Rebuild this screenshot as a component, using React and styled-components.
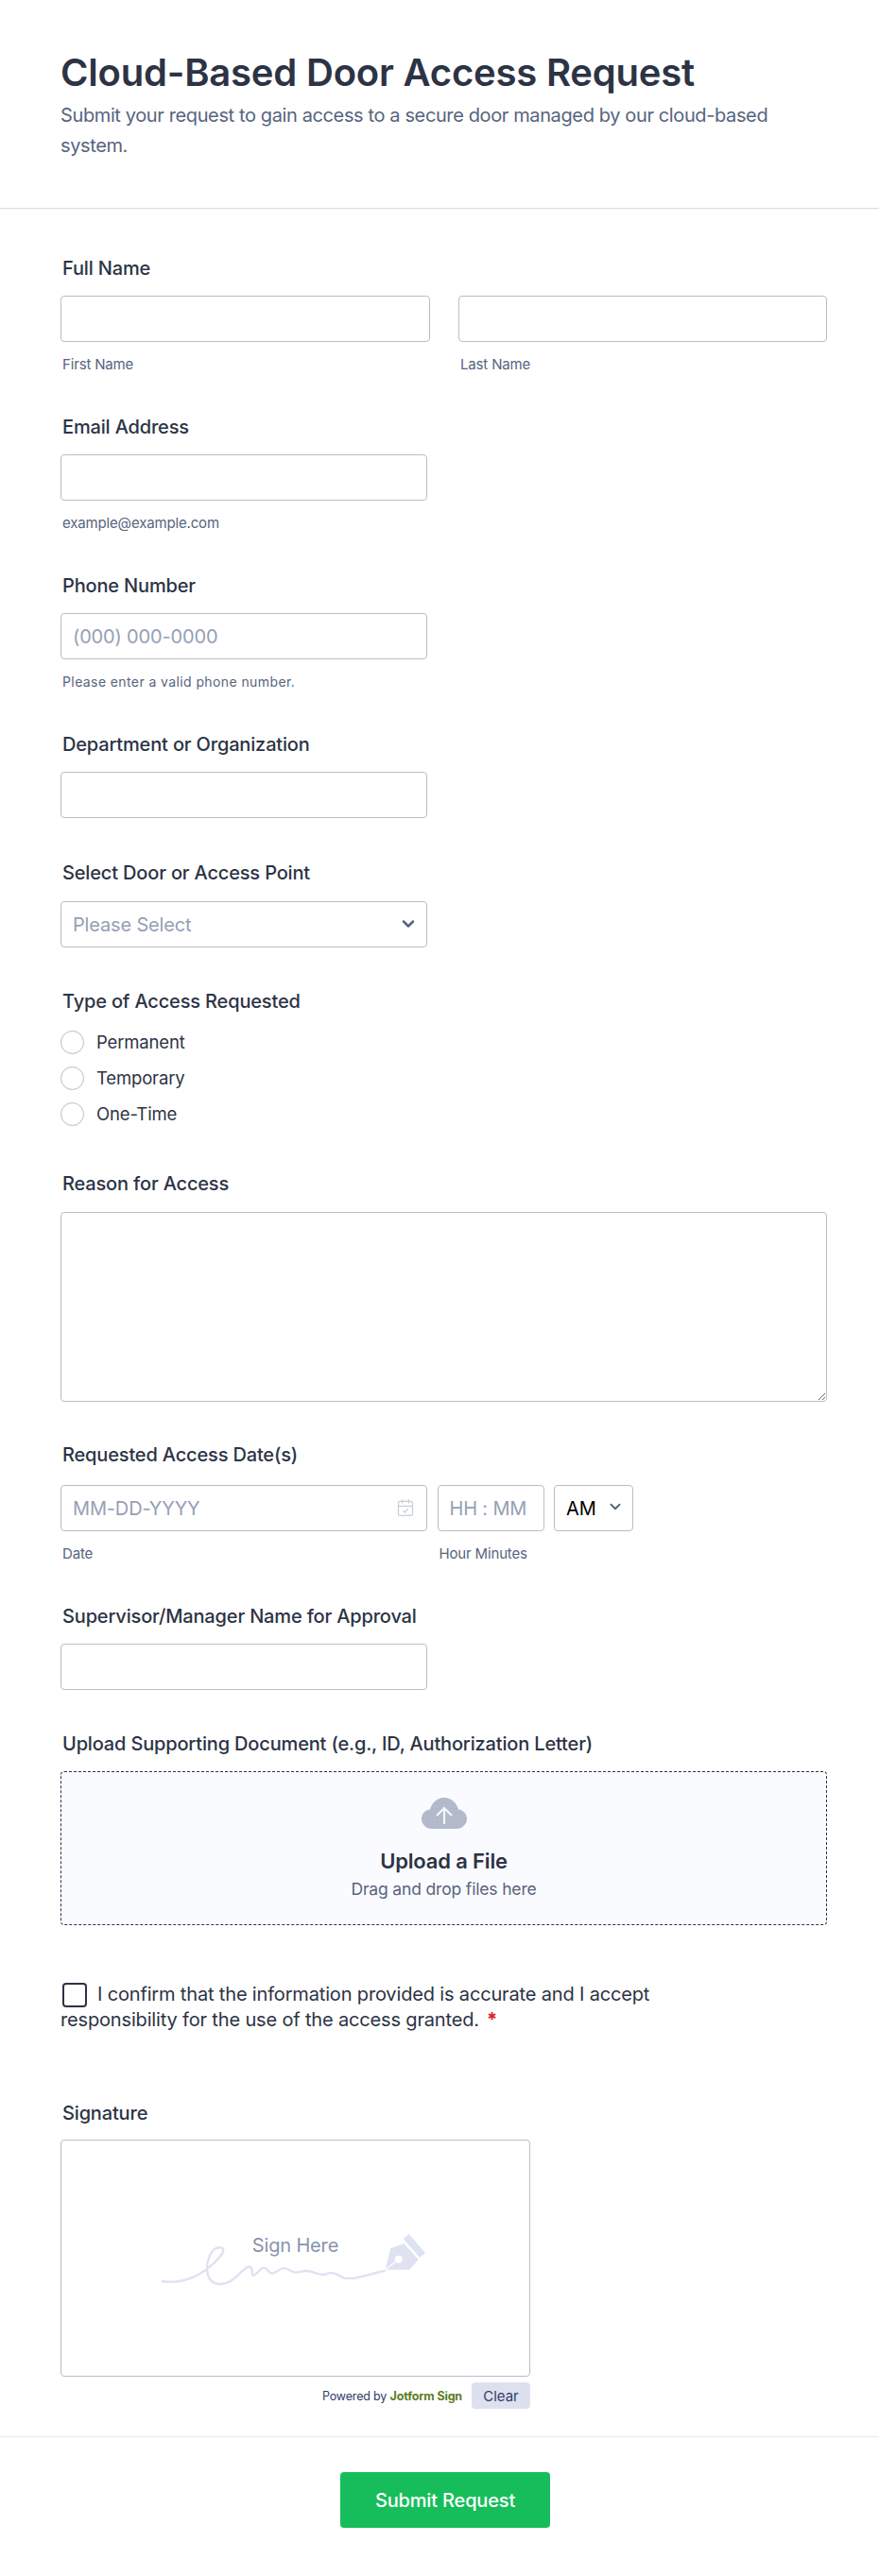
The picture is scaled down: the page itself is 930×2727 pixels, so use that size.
import React from 'react';
import styled, { createGlobalStyle } from 'styled-components';
import { CalendarCheck, ChevronDown } from 'lucide-react';

const GlobalStyle = createGlobalStyle`
    html, body {
        margin: 0;
        padding: 0;
        background: #FFF;
    }
    * {
        box-sizing: border-box;
    }
    body {
        font-family: Inter, "Liberation Sans", sans-serif;
        letter-spacing: -0.01em;
        color: #2C3345;
    }
`;

const Page = styled.div`
    width: 930px;
    height: 2727px;
    overflow: hidden;
`;

const Header = styled.header`
    height: 221px;
    padding: 52px 64px 0;
    border-bottom: 1px solid #D3DCEF;
`;

const Title = styled.h1`
    margin: 0 0 4px;
    font-size: 40px;
    line-height: 50px;
    font-weight: 600;
    letter-spacing: -0.2px;
    color: #2C3345;
`;

const Description = styled.p`
    margin: 0;
    font-size: 20px;
    line-height: 32px;
    letter-spacing: -0.38px;
    color: #57647E;
`;

const Form = styled.form`
    padding: 51px 64px 0;
    display: flex;
    flex-direction: column;
`;

const Field = styled.div`
    margin-bottom: ${p => p.$gap || 45}px;
`;

const Label = styled.label`
    display: block;
    padding-left: 2px;
    margin-bottom: ${p => p.$gap || 17}px;
    font-size: 20px;
    line-height: 24px;
    font-weight: 450;
    color: #2C3345;
`;

const Row = styled.div`
    display: flex;
    gap: ${p => p.$gap || 10.5}px;
`;

const Column = styled.div`
    width: ${p => p.$width}px;
`;

const TextInput = styled.input`
    display: block;
    width: ${p => p.$width || 388}px;
    height: 49px;
    padding: 0 12px;
    border: 1px solid #B8BDC9;
    border-radius: 4px;
    background: #FFF;
    font-family: inherit;
    font-size: 20px;
    letter-spacing: inherit;
    color: #2C3345;
    outline: none;

    &::placeholder {
        color: #95A0B5;
        opacity: 1;
    }
`;

const SubLabel = styled.div`
    margin-top: 15px;
    padding-left: 2px;
    font-size: 15px;
    line-height: 18px;
    color: #57647E;
`;

const PhoneHint = styled(SubLabel)`
    font-size: 14px;
    letter-spacing: 0.4px;
`;

const SelectWrap = styled.div`
    position: relative;
    width: ${p => p.$width}px;
    height: 49px;

    svg {
        position: absolute;
        top: 14px;
        right: ${p => p.$iconRight}px;
        color: #57647E;
        pointer-events: none;
    }
`;

const Select = styled.select`
    width: 100%;
    height: 100%;
    padding: 0 12px;
    border: 1px solid #B8BDC9;
    border-radius: 4px;
    background: #FFF;
    appearance: none;
    font-family: inherit;
    font-size: 20px;
    letter-spacing: inherit;
    color: ${p => p.$color};
    outline: none;
`;

const DateWrap = styled.div`
    position: relative;

    svg {
        position: absolute;
        top: 14px;
        right: 13px;
        color: #C8CDD8;
    }
`;

const RadioList = styled.div`
    display: flex;
    flex-direction: column;
    gap: 14px;
`;

const RadioRow = styled.label`
    display: flex;
    align-items: center;
    gap: 13px;
    height: 24px;
    font-size: 18.5px;
    color: #2C3345;
`;

const RadioCircle = styled.span`
    width: 25px;
    height: 25px;
    border: 1px solid #B8BDC9;
    border-radius: 50%;
    background: #FFF;
`;

const TextArea = styled.textarea`
    display: block;
    width: 811px;
    height: 201px;
    border: 1px solid #B8BDC9;
    border-radius: 4px;
    outline: none;
    font-family: inherit;
`;

const DropZone = styled.div`
    width: 811px;
    height: 163px;
    padding-top: 27px;
    border: 1px dashed #2C3345;
    border-radius: 4px;
    background: #FAFBFE;
    display: flex;
    flex-direction: column;
    align-items: center;
`;

const DropTitle = styled.div`
    margin-top: 18px;
    font-size: 22px;
    line-height: 32px;
    font-weight: 600;
    color: #2C3345;
`;

const DropHint = styled.div`
    margin-top: 2px;
    font-size: 17.5px;
    line-height: 24px;
    color: #57647E;
`;

const ConsentText = styled.div`
    width: 700px;
    font-size: 20px;
    line-height: 27px;
    color: #2C3345;
`;

const CheckBox = styled.span`
    display: inline-block;
    width: 26px;
    height: 26px;
    margin: 0 11px 0 2px;
    border: 2px solid #2C3345;
    border-radius: 4px;
    vertical-align: -7px;
`;

const Required = styled.span`
    margin-left: 8px;
    font-weight: 700;
    color: #E0201B;
`;

const SignatureBox = styled.div`
    position: relative;
    width: 497px;
    height: 251px;
    border: 1px solid #B8BDC9;
    border-radius: 4px;
`;

const SignatureDrawing = styled.svg`
    position: absolute;
    left: 75px;
    top: 54px;
`;

const SignHere = styled.div`
    position: absolute;
    top: 99px;
    left: 0;
    right: 0;
    text-align: center;
    font-size: 20px;
    line-height: 24px;
    color: #8894AB;
`;

const SignatureFooter = styled.div`
    width: 497px;
    margin-top: 6px;
    display: flex;
    justify-content: flex-end;
    align-items: center;
    gap: 10px;
`;

const PoweredBy = styled.div`
    font-size: 12.5px;
    color: #343C6A;
`;

const JotformSign = styled.span`
    font-weight: 700;
    color: #5B7E1F;
`;

const ClearButton = styled.button`
    width: 62px;
    height: 28px;
    padding: 0;
    border: none;
    border-radius: 4px;
    background: #DDE1EF;
    font-family: inherit;
    font-size: 15px;
    color: #343C6A;
`;

const Footer = styled.footer`
    margin-top: 29px;
    padding: 37px 0 0 12px;
    border-top: 1px solid #E3E8F3;
    display: flex;
    justify-content: center;
`;

const SubmitButton = styled.button`
    width: 222px;
    height: 59px;
    border: none;
    border-radius: 4px;
    background: #18BD5B;
    font-family: inherit;
    font-size: 20px;
    font-weight: 450;
    letter-spacing: inherit;
    color: #FFF;
`;

const cloudShape = 'M11 33C5 33 0 28 0 22.5C0 17 4 13 9 12.5C11 5 17 0 24 0C31 0 37 5 39 12.5C44 13 48 17 48 22.5C48 28 43 33 37 33Z';

const CloudIcon = () => (
    <svg width="48" height="33" viewBox="0 0 48 33">
        <defs>
            <pattern id="cloud-dots" width="5" height="5" patternUnits="userSpaceOnUse">
                <circle cx="1.5" cy="1.5" r="0.4" fill="#7F9CCB" />
            </pattern>
        </defs>
        <path d={cloudShape} fill="#B3BBCB" />
        <path d={cloudShape} fill="url(#cloud-dots)" />
        <path d="M24 28V11M16 19L24 11L32 19" fill="none" stroke="#F4F6FB" strokeWidth="2.2" />
    </svg>
);

const SignatureArt = () => (
    <SignatureDrawing width="340" height="130" viewBox="0 0 1020 390">
        <path
            d="M95 285C150 292 205 275 250 235C285 205 300 180 280 178C250 175 230 225 240 265C250 298 290 305 325 275C345 258 365 232 375 240C385 248 375 272 388 265C400 258 410 235 425 245C435 252 435 265 450 258C470 248 480 235 500 250C515 262 530 255 550 252C575 250 590 270 615 262C640 252 650 265 670 274C710 282 750 262 800 252"
            fill="none"
            stroke="#DEE2F1"
            strokeWidth="7"
            strokeLinecap="round"
        />
        <path d="M878 135L930 195L912 210L860 150Z" fill="#DEE2F1" />
        <path d="M803 248L820 180L862 165L908 216L880 248Z" fill="#DEE2F1" />
        <circle cx="845" cy="215" r="12" fill="#FFF" />
        <path d="M845 215L805 247" stroke="#FFF" strokeWidth="4" />
    </SignatureDrawing>
);

const SimpleField = ({ label, placeholder, hint, gap }) => (
    <Field $gap={gap}>
        <Label>{label}</Label>
        <TextInput placeholder={placeholder} />
        {hint}
    </Field>
);

export default function App() {
    return (
        <Page>
            <GlobalStyle />
            <Header>
                <Title>Cloud-Based Door Access Request</Title>
                <Description>
                    Submit your request to gain access to a secure door managed by our cloud-based system.
                </Description>
            </Header>
            <Form>
                <Field>
                    <Label>Full Name</Label>
                    <Row $gap={30}>
                        <Column $width={391}>
                            <TextInput $width={391} />
                            <SubLabel>First Name</SubLabel>
                        </Column>
                        <Column $width={390}>
                            <TextInput $width={390} />
                            <SubLabel>Last Name</SubLabel>
                        </Column>
                    </Row>
                </Field>
                <SimpleField label="Email Address" hint={<SubLabel>example@example.com</SubLabel>} />
                <SimpleField
                    label="Phone Number"
                    placeholder="(000) 000-0000"
                    hint={<PhoneHint>Please enter a valid phone number.</PhoneHint>}
                />
                <SimpleField label="Department or Organization" gap={46} />
                <Field>
                    <Label $gap={18}>Select Door or Access Point</Label>
                    <SelectWrap $width={388} $iconRight={10}>
                        <Select $color="#95A0B5" defaultValue="">
                            <option value="">Please Select</option>
                        </Select>
                        <ChevronDown size={20} strokeWidth={3} />
                    </SelectWrap>
                </Field>
                <Field $gap={50}>
                    <Label $gap={19}>Type of Access Requested</Label>
                    <RadioList>
                        <RadioRow><RadioCircle />Permanent</RadioRow>
                        <RadioRow><RadioCircle />Temporary</RadioRow>
                        <RadioRow><RadioCircle />One-Time</RadioRow>
                    </RadioList>
                </Field>
                <Field $gap={44}>
                    <Label $gap={18}>Reason for Access</Label>
                    <TextArea />
                </Field>
                <Field>
                    <Label $gap={20}>Requested Access Date(s)</Label>
                    <Row>
                        <Column $width={388}>
                            <DateWrap>
                                <TextInput placeholder="MM-DD-YYYY" />
                                <CalendarCheck size={20} strokeWidth={1.5} />
                            </DateWrap>
                            <SubLabel>Date</SubLabel>
                        </Column>
                        <Column $width={113}>
                            <TextInput $width={113} placeholder="HH : MM" />
                            <SubLabel>Hour Minutes</SubLabel>
                        </Column>
                        <SelectWrap $width={84} $iconRight={10}>
                            <Select $color="#000" defaultValue="AM">
                                <option value="AM">AM</option>
                            </Select>
                            <ChevronDown size={18} strokeWidth={2.5} />
                        </SelectWrap>
                    </Row>
                </Field>
                <SimpleField label="Supervisor/Manager Name for Approval" />
                <Field $gap={60}>
                    <Label>Upload Supporting Document (e.g., ID, Authorization Letter)</Label>
                    <DropZone>
                        <CloudIcon />
                        <DropTitle>Upload a File</DropTitle>
                        <DropHint>Drag and drop files here</DropHint>
                    </DropZone>
                </Field>
                <Field $gap={73}>
                    <ConsentText>
                        <CheckBox />
                        I confirm that the information provided is accurate and I accept responsibility for the use of the access granted.
                        <Required>*</Required>
                    </ConsentText>
                </Field>
                <div>
                    <Label $gap={16}>Signature</Label>
                    <SignatureBox>
                        <SignHere>Sign Here</SignHere>
                        <SignatureArt />
                    </SignatureBox>
                    <SignatureFooter>
                        <PoweredBy>Powered by <JotformSign>Jotform Sign</JotformSign></PoweredBy>
                        <ClearButton type="button">Clear</ClearButton>
                    </SignatureFooter>
                </div>
            </Form>
            <Footer>
                <SubmitButton type="button">Submit Request</SubmitButton>
            </Footer>
        </Page>
    );
}
